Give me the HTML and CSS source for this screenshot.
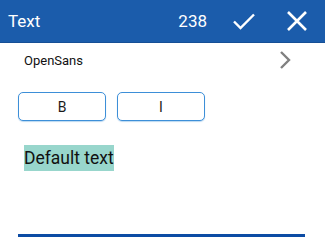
FILE: index.html
```html
<!DOCTYPE html>
<html>
<head>
<meta charset="utf-8">
<link rel="stylesheet" href="styles.css">
</head>
<body>
<header class="bar">
  <span class="title">Text</span>
  <span class="count">238</span>
  <svg class="icon check" width="26" height="26" viewBox="0 0 26 26"><path d="M3 13.5 L9.5 20 L23 6.5" fill="none" stroke="#fff" stroke-width="2.4"/></svg>
  <svg class="icon close" width="24" height="24" viewBox="0 0 24 24"><path d="M3 3 L21 21 M21 3 L3 21" fill="none" stroke="#fff" stroke-width="2.6"/></svg>
</header>
<div class="content">
  <div class="font-row">
    <span class="font-name">OpenSans</span>
    <svg class="chev" width="12" height="20" viewBox="0 0 12 20"><path d="M2 2 L10 10 L2 18" fill="none" stroke="#808080" stroke-width="2.4"/></svg>
  </div>
  <div class="buttons">
    <button class="btn">B</button>
    <button class="btn">I</button>
  </div>
  <div class="sample"><span class="hl">Default text</span></div>
  <div class="underline"></div>
</div>
</body>
</html>
```
FILE: styles.css
```css
html, body { margin: 0; padding: 0; background: #fff; }
body { width: 325px; height: 243px; overflow: hidden; font-family: Roboto, "Liberation Sans", sans-serif; }
.bar {
  height: 42px;
  background: #1b5cab;
  border-bottom: 1px solid #164f95;
  display: flex;
  align-items: center;
  padding: 0 0 0 8px;
  color: #fff;
}
.title { font-size: 17px; flex: 1; margin-top: -1px; }
.count { font-size: 17px; margin-right: 24px; margin-top: -1px; }
.icon { display: block; }
.check { margin-right: 28px; }
.close { margin-right: 16px; }
.content { padding: 0 18px 0 18px; }
.font-row {
  display: flex;
  align-items: center;
  justify-content: space-between;
  height: 34px;
  padding-left: 6px;
}
.font-name { font-size: 13px; color: #111; }
.chev { margin-right: 16px; }
.buttons { display: flex; gap: 11px; margin-top: 15px; }
.btn {
  width: 88px;
  height: 29px;
  background: #fff;
  border: 1px solid #3d8fd8;
  border-radius: 5px;
  box-shadow: 0 1px 1px rgba(61, 143, 216, 0.35);
  font-family: Roboto, "Liberation Sans", sans-serif;
  font-size: 14px;
  color: #1a1a1a;
  padding: 0;
}
.sample { margin-top: 24px; padding-left: 6px; height: 26px; }
.hl { background: #98d6cc; font-size: 17.5px; line-height: 26px; color: #111; display: inline-block; }
.underline { margin-top: 63px; height: 3px; background: #0c4ca4; width: 287px; }
```
